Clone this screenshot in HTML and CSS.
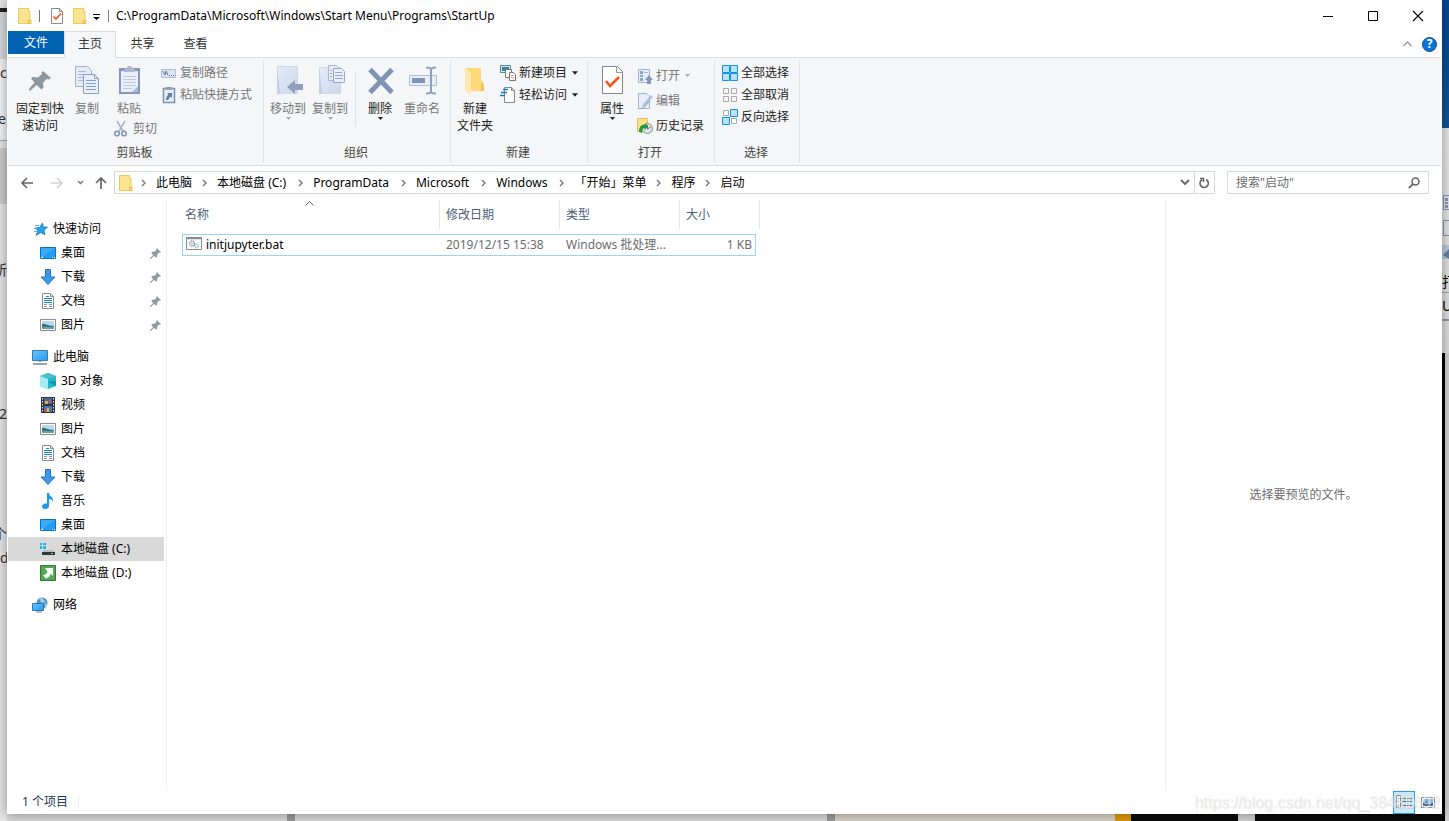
FILE: index.html
```html
<!DOCTYPE html>
<html lang="zh-CN">
<head>
<meta charset="utf-8">
<title>C:\ProgramData\Microsoft\Windows\Start Menu\Programs\StartUp</title>
<link rel="stylesheet" href="styles.css">
</head>
<body>
<svg class="defs" aria-hidden="true">
  <defs>
    <linearGradient id="gBlue" x1="0" y1="0" x2="1" y2="1"><stop offset="0" stop-color="#6fc6fb"/><stop offset="1" stop-color="#1f9bf0"/></linearGradient>
    <linearGradient id="gPale" x1="0" y1="0" x2="1" y2="1"><stop offset="0" stop-color="#e3ebf6"/><stop offset="1" stop-color="#cdd9ea"/></linearGradient>
  </defs>
  <symbol id="folder" viewBox="0 0 16 18"><path d="M1.500 1.500h10v3h1.500v12h-11.500z" fill="#ffe48f" stroke="#edc85f"/><path d="M11.500 13.500h2.500v3h-2.500z" fill="#ffe9a5" stroke="#e0b63f"/></symbol>
  <symbol id="pin" viewBox="0 0 12 12"><path d="M7.500 0l4.500 4.500-1.200.6-.8-.2-2.200 2.300.1 2.200-1.300 1.300L4.400 8.500.8 12H0v-.8l3.500-3.600L1.300 5.400l1.300-1.300 2.200.1 2.300-2.200-.2-.8z" fill="#90999f"/></symbol>
  <symbol id="arrow" viewBox="0 0 7 4"><path d="M0 0h7L3.500 4z" fill="currentColor"/></symbol>
  <symbol id="chev" viewBox="0 0 5 8"><path d="M1 1l3 3-3 3" fill="none" stroke="#777" stroke-width="1.400"/></symbol>
  <symbol id="desktop" viewBox="0 0 16 16"><path d="M.5 2.500h15v11H.5z" fill="#1e9df7" stroke="#0b73bf"/><path d="M1 3h14L3 12H1z" fill="#3aaafc"/><path d="M1 12.500h2m9 0h1m1 0h1" stroke="#fff"/></symbol>
  <symbol id="download" viewBox="0 0 16 16"><path d="M5.500.5h5v7.500h4.500L8 15.500 1 8h4.500z" fill="#4097e8" stroke="#1f74c5"/></symbol>
  <symbol id="doc" viewBox="0 0 16 16"><path d="M2.500.5h8l3 3v12h-11z" fill="#fff" stroke="#858d94"/><path d="M10.500.5v3h3" fill="none" stroke="#858d94"/><path d="M6 3.500h3M4 5.500h8M4 7.500h8M4 9.500h8" stroke="#1687d5"/><path d="M4 11.500h3m2 0h3M4 13.500h3m2 0h3" stroke="#8d969e"/></symbol>
  <symbol id="picture" viewBox="0 0 16 16"><path d="M.5 2.500h15v11H.5z" fill="#fff" stroke="#8b8b8b"/><path d="M2 4h12v8H2z" fill="#b4daf6"/><path d="M2 7c3-1 5 2 12 2v2H2z" fill="#3e766e"/><path d="M2 10.500c4-1 8 0 12-.5v2H2z" fill="#6d9cc8"/></symbol>
  <symbol id="pc" viewBox="0 0 16 16"><path d="M.5 1.500h15v10H.5z" fill="url(#gBlue)" stroke="#397dae"/><path d="M6 12h4v1H6z" fill="#b8c7d3"/><path d="M1 15h14" stroke="#74899d" stroke-width="1.500"/></symbol>
  <symbol id="cube" viewBox="0 0 16 16"><path d="M0 3l8-3 8 3v10l-8 3-8-3z" fill="#24b6ce"/><path d="M0 3l8-3 8 3-8 3z" fill="#49c2d0"/><path d="M0 3l8 3v10l-8-3z" fill="#a5ebf1"/><path d="M8 9l8 4V8z" fill="#0798b2"/></symbol>
  <symbol id="video" viewBox="0 0 16 16"><path d="M1 0h14v16H1z" fill="#30343a"/><path d="M4 1h8v6H4z" fill="#4267ad"/><path d="M4 9h8v6H4z" fill="#4778bd"/><path d="M5 4h3v3H5zm2 7h2v4H7z" fill="#e9b528"/><path d="M9 3h2v3H9zM5 12h2v3H5z" fill="#ca5446"/><path d="M2.500 1v15M13.500 1v15" stroke="#e5e7e9" stroke-dasharray="1.500 1.500"/></symbol>
  <symbol id="music" viewBox="0 0 16 16"><path d="M7 0h2c0 4 5 3 4 9-1-3-3-3-4-3v7c0 2-1.500 3-4 3-1.500 0-3-.8-3-2.500 0-2 2-3.500 5-3z" fill="#179bf0"/></symbol>
  <symbol id="diskc" viewBox="0 0 16 16"><path d="M0 2h2v2H0zm3 0h3v2H3zM0 5h2v3H0zm3 0h3v3H3z" fill="#20b5ee"/><path d="M4 9h9l1.500 2H2.500z" fill="#b8bcc0"/><path d="M2 11h13v3H2z" fill="#35393c"/><path d="M11 12.500h2" stroke="#52e261"/></symbol>
  <symbol id="diskd" viewBox="0 0 16 16"><path d="M.5.5h15v15H.5z" fill="#53a755" stroke="#2e7a33"/><path d="M5 3h8v8l-2.500-2.500-1 3L7 13l-1 .5-3-3 3-1.500 1.500-2z" fill="#fff"/></symbol>
  <symbol id="network" viewBox="0 0 16 16"><circle cx="10" cy="6" r="5.500" fill="#4c93c0"/><path d="M7 2c2 1 1 3 3 4l3-1 2 3-2 3V4L10 1z" fill="#a5d2e8"/><path d="M.5 6.500h11v7H.5z" fill="url(#gBlue)" stroke="#3077aa"/><path d="M4 15h6" stroke="#6f8495"/></symbol>
  <symbol id="star" viewBox="0 0 16 16"><path d="M10.500 2l.8 4 4.200.2-3.500 2.800.8 4.800-3.800-2.300L4 14.500l2-4.800-3-2.700 4.500-.5z" fill="#2b9ee9" stroke="#1778c2" stroke-width=".8"/><path d="M3 4.500h4M2 7.500h3M2 10.500h3" stroke="#58aee8"/></symbol>
</svg>

<div class="backdrop" aria-hidden="true">
  <div class="back-left"><i class="bl-dark"></i><i class="bl-tool"></i><i class="bl-panel"></i><i class="bl-side"></i>
    <span class="t1">cs</span><span class="t2">eb</span><span class="t3">所</span><span class="t4">32</span><span class="t5">个</span><span class="t6">d</span></div>
  <div class="back-right"><i class="br-blue"></i><i class="br-light">
    <svg width="7" height="80" viewBox="0 0 7 80"><path d="M7 .5H1.500v14H7M7 25.500H1.500v15H7" fill="none" stroke="#8598bd"/><path d="M3 3h3v3H3zm0 4h3v2H3zm0 3h3v3H3z" fill="#8598bd"/><path d="M0 50h7v14H0z" fill="#bdcadd"/><path d="M1 60l6-6v10z" fill="#6880a5"/></svg>
    <b>打</b><b class="u">U</b></i><i class="br-dark"></i></div>
  <div class="back-bottom"><i class="b1"></i><i class="b2"></i><i class="b3"></i><i class="b2"></i><i class="b4"></i><i class="b5"></i><i class="b6"></i><i class="b7"></i><i class="b6 grow"></i></div>
</div>

<div class="window">
  <header class="titlebar">
    <svg class="ti" width="16" height="18"><use href="#folder"/></svg>
    <i class="tsep"></i>
    <button class="plain" aria-label="属性"><svg width="14" height="16" viewBox="0 0 14 16"><path d="M1.500.5h8l3 3v12h-11z" fill="#fff" stroke="#8c8c8c"/><path d="M9.500.5v3h3" fill="none" stroke="#8c8c8c"/><path d="M3.500 8.500L6 11l5-5.500" fill="none" stroke="#f2581b" stroke-width="1.700"/></svg></button>
    <button class="plain" aria-label="新建文件夹"><svg width="16" height="18"><use href="#folder"/></svg></button>
    <button class="plain qa" aria-label="自定义快速访问工具栏"><svg width="7" height="6" viewBox="0 0 7 6"><path d="M0 0h7v1H0zM0 3h7L3.500 6z" fill="#000"/></svg></button>
    <i class="tsep"></i>
    <h1>C:\ProgramData\Microsoft\Windows\Start Menu\Programs\StartUp</h1>
    <div class="controls">
      <button class="plain" aria-label="最小化"><svg width="10" height="10"><path d="M0 5.500h10" stroke="#000"/></svg></button>
      <button class="plain" aria-label="最大化"><svg width="10" height="10"><path d="M.5.5h9v9h-9z" fill="none" stroke="#000"/></svg></button>
      <button class="plain" aria-label="关闭"><svg width="10" height="10"><path d="M0 0l10 10M10 0L0 10" stroke="#000" stroke-width="1.100"/></svg></button>
    </div>
  </header>

  <nav class="tabs">
    <button class="file">文件</button><button class="active">主页</button><button>共享</button><button>查看</button>
    <div class="help">
      <button class="plain" aria-label="折叠功能区"><svg width="9" height="6"><path d="M.5 5l4-4 4 4" fill="none" stroke="#999" stroke-width="1.300"/></svg></button>
      <button class="plain round" aria-label="帮助">?</button>
    </div>
  </nav>

  <section class="ribbon">
    <div class="group g-clip">
      <div class="tools">
        <button class="big pinbtn"><svg width="32" height="32" viewBox="0 0 32 32"><path d="M19 6l8 7-2.500 1.500-2-.5-3.500 4 .5 4.500-2 2-5-4.500-6 5.500H5v-1.500l5.500-6.500L7 13.500l1.500-1.500 5.500.5 4-3.500-.5-1.500z" fill="#8c979e"/></svg><span>固定到快<br>速访问</span></button>
        <button class="big off copybtn"><svg width="32" height="32" viewBox="0 0 32 32"><path d="M4.500 1.500h12l4 4v16h-16z" fill="#e4ecf7" stroke="#a3b3cf"/><path d="M7 6.500h8M7 9.500h10M7 12.500h10M7 15.500h10" stroke="#a8b9d6"/><path d="M12.500 9.500h11l4 4v15h-15z" fill="#e9eff8" stroke="#8ea0c2"/><path d="M23.500 9.500v4h4M15 15.500h10M15 18.500h10M15 21.500h10M15 24.500h10" fill="none" stroke="#8ea0c2"/></svg><span>复制</span></button>
        <div class="paste">
          <button class="big off"><svg width="32" height="32" viewBox="0 0 32 32"><path d="M6 3h21v26H6z" fill="#8597bb"/><path d="M8 6h17v21H8z" fill="#eaf0f9"/><path d="M11 5c0-2 3-1 4-4h3c1 3 4 2 4 4v2H11z" fill="#a9b7d1"/><path d="M10 11.500h13M10 14.500h13M10 17.500h13M10 20.500h13M10 23.500h10" stroke="#bdcae0"/><path d="M25 27h-6l6-6z" fill="#a9bbd9"/></svg><span>粘贴</span></button>
          <button class="small off"><svg width="16" height="16" viewBox="0 0 16 16"><path d="M3 0l6.500 11M11 0L4.500 11" stroke="#a8b5cb" stroke-width="1.600"/><circle cx="3" cy="12.500" r="2.300" fill="none" stroke="#8596b6" stroke-width="1.600"/><circle cx="10" cy="12.500" r="2.300" fill="none" stroke="#8596b6" stroke-width="1.600"/></svg>剪切</button>
        </div>
        <div class="stack">
          <button class="small off"><svg width="16" height="16" viewBox="0 0 16 16"><path d="M.5 4.500h14v8H.5z" fill="#dce5f2" stroke="#aebdd5"/><path d="M2 6l2 4 1-4 2 4" fill="none" stroke="#5d769f"/><path d="M8 10.500h1m1 0h1m1 0h1" stroke="#5d769f"/></svg>复制路径</button>
          <button class="small off"><svg width="16" height="16" viewBox="0 0 16 16"><path d="M2.500 1.500h11v14h-11z" fill="#e8eef8" stroke="#8093b7" stroke-width="1.600"/><path d="M5 0h6v3H5z" fill="#8fa0c0"/><path d="M6 6h5v5L9.500 9.500 7 13H5c0-3 1-4 2.500-5.500z" fill="#687da5"/></svg>粘贴快捷方式</button>
        </div>
      </div>
      <h2>剪贴板</h2>
    </div>
    <div class="group g-org">
      <div class="tools">
        <button class="big off"><svg width="32" height="32" viewBox="0 0 32 32"><path d="M5.500 1.500h20v27h-20z" fill="url(#gPale)" stroke="#ccd9eb"/><path d="M8 26v3H5V2z" fill="#c1d0e7"/><path d="M15 22l8-7v4h8v6h-8v4z" fill="#8e9fbe"/></svg><span>移动到</span><svg class="dd" width="5" height="3"><use href="#arrow"/></svg></button>
        <button class="big off"><svg width="32" height="32" viewBox="0 0 32 32"><path d="M5.500 2.500h21v26h-21z" fill="url(#gPale)" stroke="#ccd9eb"/><path d="M8 26v3H5V3z" fill="#c1d0e7"/><path d="M14.500.5h8l3 3v12h-11z" fill="#e6edf8" stroke="#a7b7d0"/><path d="M19.500 3.500h8l3 3v11h-11z" fill="#eaf0f8" stroke="#94a7c5"/><path d="M21 7.500h7m-7 3h8m-8 3h8M16 5.500h2m-2 3h2m-2 3h2" stroke="#94a7c5"/></svg><span>复制到</span><svg class="dd" width="5" height="3"><use href="#arrow"/></svg></button>
        <i class="vsep"></i>
        <button class="big"><svg width="32" height="32" viewBox="0 0 32 32"><path d="M6 4.500l22 23M28 4.500l-22 23" stroke="#8093b7" stroke-width="5"/></svg><span>删除</span><svg class="dd" width="5" height="3"><use href="#arrow"/></svg></button>
        <button class="big off"><svg width="32" height="32" viewBox="0 0 32 32"><path d="M3.500 10.500h27v10h-27z" fill="#e8eff9" stroke="#aebed8"/><path d="M6 13h13v5H6z" fill="#8194b8"/><path d="M20 2.500c3 0 5 0 5 3v20c0 3-2 3-5 3M30 2.500c-3 0-5 0-5 3v20c0 3 2 3 5 3" fill="none" stroke="#8d9fbe" stroke-width="2"/></svg><span>重命名</span></button>
      </div>
      <h2>组织</h2>
    </div>
    <div class="group g-new">
      <div class="tools">
        <button class="big"><svg width="32" height="32" viewBox="0 0 32 32"><path d="M6 3h16v13h2v10H6z" fill="#ffd978"/><path d="M6 3l6 4v23l-6-4z" fill="#ffe9ae"/><path d="M22 16v10h3v-6z" fill="#efc45b"/></svg><span>新建<br>文件夹</span></button>
        <div class="stack">
          <button class="small"><svg width="16" height="16" viewBox="0 0 16 16"><path d="M.5.500h10v7H.5z" fill="#c7eafa" stroke="#5689a0"/><path d="M2 2h7v4H2z" fill="#3c829c"/><path d="M5.500 4.500h6v8h-6z" fill="#fff" stroke="#777"/><path d="M9.500 7.500h4l2 2v6h-6z" fill="#fff" stroke="#777"/><path d="M11 10.500h3m-3 2h3" stroke="#e49da0"/></svg>新建项目<svg class="side" width="6" height="4"><use href="#arrow"/></svg></button>
          <button class="small"><svg width="16" height="16" viewBox="0 0 16 16"><path d="M4.500.5h7l3 3v12h-10z" fill="#fff" stroke="#888"/><path d="M11.500.5v3h3" fill="none" stroke="#888"/><path d="M3 2.500h5M1 5.500h6M0 8.500h5" stroke="#1877b9" stroke-width="1.300"/></svg>轻松访问<svg class="side" width="6" height="4"><use href="#arrow"/></svg></button>
        </div>
      </div>
      <h2>新建</h2>
    </div>
    <div class="group g-open">
      <div class="tools">
        <button class="big"><svg width="32" height="32" viewBox="0 0 32 32"><path d="M6.500 1.500h15l5 5v22h-20z" fill="#fff" stroke="#858585"/><path d="M20.500 1.500v6h6" fill="#eee" stroke="#999"/><path d="M10 16l4 5 9-9" fill="none" stroke="#f4561d" stroke-width="2.600"/></svg><span>属性</span><svg class="dd" width="5" height="3"><use href="#arrow"/></svg></button>
        <div class="stack loose">
          <button class="small off"><svg width="16" height="16" viewBox="0 0 16 16"><path d="M1.500 1.500h11v13h-11z" fill="#e7eef8" stroke="#a2b3cf"/><path d="M3 3h3v3H3zm0 4h3v2H3zm0 3h3v3H3z" fill="#8ea2c4"/><path d="M7 4.500h4" stroke="#a7b8d2"/><path d="M8 12l4-5 4 5h-2v4h-4v-4z" fill="#8598bb"/></svg>打开<svg class="side" width="5" height="3"><use href="#arrow"/></svg></button>
          <button class="small off"><svg width="16" height="16" viewBox="0 0 16 16"><path d="M1.500.5h8l3 3v12h-11z" fill="#e8eef8" stroke="#a4b5d0"/><path d="M5 15l1-4 8-9 2 2-8 9z" fill="#b0c2de"/><path d="M1 15.500h5l7-8" fill="none" stroke="#8ba4cb"/></svg>编辑</button>
          <button class="small"><svg width="16" height="16" viewBox="0 0 16 16"><path d="M.5.500h10v13H.5z" fill="#ffe28b" stroke="#e4be55"/><circle cx="10.500" cy="10.500" r="5" fill="#e0e3e5" stroke="#878f94"/><path d="M10.500 7v4l3-2" fill="none" stroke="#687176"/><path d="M2 14c0-6 3-8 6-7l1-2 2 4-4 3 .5-2c-2 0-3 2-2 5z" fill="#259c37"/></svg>历史记录</button>
        </div>
      </div>
      <h2>打开</h2>
    </div>
    <div class="group g-select">
      <div class="tools">
        <div class="stack">
          <button class="small"><svg width="16" height="16" viewBox="0 0 16 16"><path d="M.5.500h7v7h-7zM8.500.5h7v7h-7zM.5 8.500h7v7h-7zM8.500 8.500h7v7h-7z" fill="#b9e3fb" stroke="#1593e2"/></svg>全部选择</button>
          <button class="small"><svg width="16" height="16" viewBox="0 0 16 16"><path d="M1.500 1.500h5v5h-5zM9.500 1.500h5v5h-5zM1.500 9.500h5v5h-5zM9.500 9.500h5v5h-5z" fill="#fbfbfb" stroke="#aaa"/></svg>全部取消</button>
          <button class="small"><svg width="16" height="16" viewBox="0 0 16 16"><path d="M8.500.5h7v7h-7zM.5 8.500h7v7h-7z" fill="#b9e3fb" stroke="#1593e2"/><path d="M1.500 1.500h5v5h-5zM9.500 9.500h5v5h-5z" fill="#fbfbfb" stroke="#aaa"/></svg>反向选择</button>
        </div>
      </div>
      <h2>选择</h2>
    </div>
  </section>

  <div class="addressrow">
    <div class="history">
      <button class="plain" aria-label="后退"><svg width="12" height="12"><path d="M12 6H1M6 1L1 6l5 5" fill="none" stroke="#666" stroke-width="1.600"/></svg></button>
      <button class="plain" aria-label="前进"><svg width="12" height="12"><path d="M0 6h11M6 1l5 5-5 5" fill="none" stroke="#d2d2d2" stroke-width="1.600"/></svg></button>
      <button class="plain recent" aria-label="最近浏览的位置"><svg width="7" height="5"><path d="M1 1l2.500 2.500L6 1" fill="none" stroke="#777" stroke-width="1.400"/></svg></button>
      <button class="plain up" aria-label="上移"><svg width="12" height="12"><path d="M6 12V1M1 6l5-5 5 5" fill="none" stroke="#666" stroke-width="1.700"/></svg></button>
    </div>
    <div class="address">
      <svg class="afolder" width="16" height="18"><use href="#folder"/></svg>
      <svg class="chev" width="5" height="8"><use href="#chev"/></svg><button class="plain">此电脑</button>
      <svg class="chev" width="5" height="8"><use href="#chev"/></svg><button class="plain latin">本地磁盘 (C:)</button>
      <svg class="chev" width="5" height="8"><use href="#chev"/></svg><button class="plain latin">ProgramData</button>
      <svg class="chev" width="5" height="8"><use href="#chev"/></svg><button class="plain latin">Microsoft</button>
      <svg class="chev" width="5" height="8"><use href="#chev"/></svg><button class="plain latin">Windows</button>
      <svg class="chev" width="5" height="8"><use href="#chev"/></svg><button class="plain">「开始」菜单</button>
      <svg class="chev" width="5" height="8"><use href="#chev"/></svg><button class="plain">程序</button>
      <svg class="chev" width="5" height="8"><use href="#chev"/></svg><button class="plain">启动</button>
      <button class="plain drop" aria-label="以前的位置"><svg width="10" height="7"><path d="M1 1l4 4 4-4" fill="none" stroke="#666" stroke-width="1.900"/></svg></button>
      <button class="plain refresh" aria-label="刷新"><svg width="11" height="12"><path d="M7 2.500a4.200 4.200 0 1 1-4 .2M1 1.500h3.500V5" fill="none" stroke="#666" stroke-width="1.600"/></svg></button>
    </div>
    <form class="search">
      <input type="text" aria-label="搜索" placeholder='搜索"启动"'>
      <button class="plain" type="button" aria-label="搜索"><svg width="12" height="12"><circle cx="7.500" cy="4.500" r="3.500" fill="none" stroke="#666" stroke-width="1.500"/><path d="M5 7L.8 11.200" stroke="#666" stroke-width="1.800"/></svg></button>
    </form>
  </div>

  <div class="content">
    <nav class="tree">
      <ul>
        <li class="root"><svg><use href="#star"/></svg>快速访问</li>
        <li><svg><use href="#desktop"/></svg>桌面<svg class="pin"><use href="#pin"/></svg></li>
        <li><svg><use href="#download"/></svg>下载<svg class="pin"><use href="#pin"/></svg></li>
        <li><svg><use href="#doc"/></svg>文档<svg class="pin"><use href="#pin"/></svg></li>
        <li><svg><use href="#picture"/></svg>图片<svg class="pin"><use href="#pin"/></svg></li>
      </ul>
      <ul>
        <li class="root"><svg><use href="#pc"/></svg>此电脑</li>
        <li><svg><use href="#cube"/></svg>3D 对象</li>
        <li><svg><use href="#video"/></svg>视频</li>
        <li><svg><use href="#picture"/></svg>图片</li>
        <li><svg><use href="#doc"/></svg>文档</li>
        <li><svg><use href="#download"/></svg>下载</li>
        <li><svg><use href="#music"/></svg>音乐</li>
        <li><svg><use href="#desktop"/></svg>桌面</li>
        <li class="current"><svg><use href="#diskc"/></svg>本地磁盘 (C:)</li>
        <li><svg><use href="#diskd"/></svg>本地磁盘 (D:)</li>
      </ul>
      <ul>
        <li class="root"><svg><use href="#network"/></svg>网络</li>
      </ul>
    </nav>
    <main>
      <table>
        <colgroup><col class="c-name"><col class="c-date"><col class="c-type"><col class="c-size"><col class="c-end"></colgroup>
        <thead><tr><th>名称<svg class="sort" width="9" height="5"><path d="M.5 4.500l4-4 4 4" fill="none" stroke="#666"/></svg></th><th>修改日期</th><th>类型</th><th colspan="2">大小</th></tr></thead>
        <tbody><tr><td><svg width="16" height="14" viewBox="0 0 16 14"><path d="M.5.500h15v12H.5z" fill="#fff" stroke="#858b91"/><path d="M1 1.500h14" stroke="#858b91" stroke-width="1.500"/><circle cx="6" cy="6.500" r="2.500" fill="none" stroke="#8f989f" stroke-width="1.400" stroke-dasharray="1.400 .6"/><circle cx="6" cy="6.500" r=".8" fill="#8f989f"/><circle cx="10.500" cy="9" r="2" fill="#d8edf9" stroke="#82aecb" stroke-dasharray="1.300 .6"/></svg>initjupyter.bat</td><td>2019/12/15 15:38</td><td>Windows 批处理...</td><td>1 KB</td><td></td></tr></tbody>
      </table>
    </main>
    <aside>选择要预览的文件。</aside>
  </div>

  <footer>
    <span>1 个项目</span>
    <div class="views">
      <button class="plain on" aria-label="详细信息"><svg width="16" height="14" viewBox="0 0 16 14"><path d="M.5.500h4v12h-4z" fill="#fff" stroke="#888"/><path d="M2 3.500h1m-1 3h1" stroke="#55708c"/><path d="M2 10.500h1" stroke="#d44"/><path d="M6 3.500h4m1 0h5M6 6.500h4m1 0h5M6 10.500h4m1 0h5" stroke="#56636d"/></svg></button>
      <button class="plain" aria-label="大缩略图"><svg width="14" height="11" viewBox="0 0 14 11"><path d="M.5.500h13v10H.5z" fill="#fff" stroke="#888"/><path d="M2 2h10v7H2z" fill="#83b9ed"/><path d="M2 6l3-2 3 3 4-1v3H2z" fill="#40658d"/></svg></button>
    </div>
  </footer>
</div>
<div class="watermark">https://blog.csdn.net/qq_38481692</div>
</body>
</html>
```
FILE: styles.css
```css
* { box-sizing: border-box; }
html, body { height: 100%; }
body { margin: 0; overflow: hidden; font: 12px/18px "Noto Sans", "Noto Sans CJK SC", sans-serif; color: #000; background: #dedede; }
button, input { font: inherit; color: inherit; }
h1, h2, ul { margin: 0; padding: 0; font: inherit; list-style: none; }
svg { display: block; flex: none; overflow: visible; }
i { display: block; flex: none; }
.defs { position: absolute; width: 0; height: 0; }
.plain { display: flex; align-items: center; justify-content: center; border: 0; padding: 0; background: none; white-space: nowrap; }

/* desktop behind the window */
.backdrop { position: absolute; inset: 0; overflow: hidden; font-size: 14px; }
.backdrop i, .backdrop span { position: absolute; font-style: normal; }
.back-left { position: absolute; left: 0; top: 0; bottom: 0; width: 7px; background: #e6e6e6; color: #333; }
.bl-dark { top: 8px; width: 7px; height: 4px; background: #222; }
.bl-tool { top: 12px; width: 7px; height: 47px; background: #d4d9de; }
.bl-panel { top: 59px; width: 7px; height: 82px; background: #f3f4f5; border-bottom: 1px solid #aaa; }
.bl-side { top: 148px; width: 7px; height: 56px; background: #ccc; }
.back-left span { right: 0; }
.back-left .t1 { top: 64px; left: 0; }
.back-left .t2 { top: 110px; left: -2px; }
.back-left .t3 { top: 261px; }
.back-left .t4 { top: 405px; }
.back-left .t5 { top: 525px; }
.back-left .t6 { top: 549px; left: 0; }
.back-right { position: absolute; right: 0; top: 0; bottom: 0; width: 7px; background: #d0d0d0; overflow: hidden; }
.br-blue { top: 0; width: 7px; height: 128px; background: linear-gradient(#074494, #125493); }
.br-light { top: 128px; width: 7px; height: 225px; background: linear-gradient(#e9e9e9, #ddd); padding-top: 67px; }
.br-light b { display: block; font-weight: 400; line-height: 14px; }
.br-light .u { margin-top: 3px; line-height: 26px; border-top: 1px solid #aaa; border-bottom: 2px solid #999; }
.br-dark { top: 353px; bottom: 0; width: 3px; background: #000; }
.back-bottom { position: absolute; left: 7px; right: 7px; bottom: 0; height: 7px; display: flex; }
.back-bottom i { position: static; height: 7px; }
.b1 { width: 280px; background: #d8d8d8; }
.b2 { width: 8px; background: #999; }
.b3 { width: 532px; background: #d8d8d8; }
.b4 { width: 280px; background: #d9d2c8; }
.b5 { width: 16px; background: #dc9a0b; }
.b6 { width: 107px; background: #0a0a0a; }
.b7 { width: 17px; background: #d2d2d2; }
.back-bottom .grow { flex: 1; }

.window { position: relative; display: flex; flex-direction: column; height: calc(100% - 7px); margin: 0 7px; padding: 0 1px; background: #fff; box-shadow: 0 0 12px rgba(0, 0, 0, .4); }

.titlebar { display: flex; align-items: center; height: 31px; padding-left: 9px; }
.tsep { width: 1px; height: 12px; margin: 0 7px 0 6px; background: #777; }
.titlebar .tsep + .plain { margin: 0 8px 0 3px; }
.qa { margin: 3px 2px 0 5px; }
.titlebar h1 { white-space: nowrap; }
.controls { display: flex; margin-left: auto; padding-right: 1px; }
.controls .plain { width: 45px; height: 30px; }

.tabs { display: flex; height: 27px; border-bottom: 1px solid #dadbdc; }
.tabs > button { width: 53px; height: 26px; border: 0; padding: 0; background: none; color: #333; }
.tabs > .file { width: 56px; background: #0063b1; color: #fff; height: 23px; }
.tabs > .active { width: 52px; height: 27px; padding-bottom: 2px; border: 1px solid #dadbdc; border-bottom: 0; background: #f5f6f7; }
.help { display: flex; align-items: center; gap: 10px; margin-left: auto; padding-right: 4px; }
.round { width: 15px; height: 15px; border: 1px solid #0b4f98; border-radius: 50%; background: #0b74d4; color: #fff; font-weight: 700; }

.ribbon { display: flex; height: 108px; padding: 3px 0; background: #f5f6f7; border-bottom: 1px solid #dadbdc; }
.group { display: flex; flex-direction: column; border-right: 1px solid #e2e3e4; }
.g-clip { width: 256px; }
.g-org { width: 187px; }
.g-new { width: 137px; }
.g-open { width: 127px; }
.g-select { width: 85px; }
.tools { display: flex; flex: 1; padding: 1px 0 0 3px; }
.group h2 { height: 18px; padding-right: 2px; text-align: center; color: #444; }
.big { position: relative; display: flex; flex-direction: column; align-items: center; width: 42px; height: 76px; border: 0; padding: 3px 0 0; background: none; color: #222; white-space: nowrap; }
.big span { line-height: 17px; margin-top: 3px; }
.big.off, .small.off { color: #777; }
.off .dd, .off .side { color: #aaa; }
.pinbtn { width: 58px; }
.copybtn { width: 36px; }
.paste { width: 56px; }
.paste .big { height: 56px; width: 48px; }
.paste .small { margin-left: 9px; }
.stack { display: flex; flex-direction: column; }
.small { display: flex; align-items: center; gap: 3px; height: 22px; border: 0; padding: 0; background: none; color: #222; white-space: nowrap; }
.small .side { margin-left: 2px; }
.loose .small { height: 25px; }
.loose { margin-top: 1px; }
.g-new .stack, .g-open .stack { margin-left: 4px; }
.g-select .tools { padding-left: 7px; }
.vsep { width: 1px; height: 55px; margin: 10px 3px 0 4px; background: #dfe1e3; }

.addressrow { display: flex; align-items: center; height: 33px; padding-right: 12px; }
.history { display: flex; width: 106px; padding-left: 4px; }
.history .plain { width: 30px; height: 22px; }
.history .recent { width: 17px; }
.history .up { width: 24px; }
.address { display: flex; flex: 1; align-items: center; height: 23px; border: 1px solid #d9d9d9; padding-left: 3px; }
.chev { margin: 0 10px; }
.latin { margin-right: 2px; }
.afolder + .chev { margin-left: 7px; }
.drop { width: 18px; margin-left: auto; height: 21px; }
.refresh { width: 20px; height: 21px; border-left: 1px solid #d9d9d9; }
.search { display: flex; width: 202px; height: 23px; margin-left: 12px; border: 1px solid #d9d9d9; padding-right: 8px; }
.search input { flex: 1; min-width: 0; border: 0; padding: 0 0 0 8px; outline: 0; background: none; }
.search input::placeholder { color: #6d6d6d; opacity: 1; }

.content { display: flex; flex: 1; min-height: 0; padding-top: 1px; }
.tree { width: 159px; padding-top: 17px; border-right: 1px solid #f0f0f0; }
.tree ul { margin-bottom: 8px; }
.tree li { display: flex; align-items: center; gap: 5px; height: 24px; margin-right: 2px; padding-left: 32px; }
.tree .root { padding-left: 24px; }
.tree svg { width: 16px; height: 16px; }
.tree .pin { width: 11px; height: 11px; margin: 0 3px 0 auto; }
.tree .current { background: #d9d9d9; }
main { flex: 1; padding-left: 15px; }
table { width: 578px; table-layout: fixed; border-collapse: separate; border-spacing: 0; color: #6d6d6d; }
.c-name { width: 258px; }
.c-date, .c-type { width: 120px; }
.c-size { width: 76px; }
.c-end { width: 4px; }
th { position: relative; height: 29px; padding: 0 0 0 6px; border-right: 1px solid #e5e5e5; color: #4c607a; font-weight: 400; text-align: left; }
th:first-child, td:first-child { padding-left: 3px; }
.sort { position: absolute; left: 123px; top: 1px; }
thead::after { content: ""; display: block; height: 5px; }
td { height: 22px; padding: 0 0 0 6px; line-height: 18px; white-space: nowrap; border: solid #99d1ff; border-width: 1px 0; }
td:first-child { border-left-width: 1px; color: #000; }
td svg { display: inline-block; margin-right: 4px; vertical-align: -2px; }
td:nth-child(4) { border-right-width: 1px; padding-right: 3px; text-align: right; }
td:last-child { border: 0; padding: 0; }
aside { display: flex; align-items: center; justify-content: center; width: 276px; border-left: 1px solid #f0f0f0; color: #6d6d6d; }

footer { display: flex; align-items: center; height: 24px; padding: 0 3px 0 14px; color: #1e395b; }
footer span { padding-right: 10px; line-height: 12px; border-right: 1px solid #eee; }
.views { display: flex; gap: 3px; margin-left: auto; }
.views .plain { width: 20px; height: 23px; }
.views .on { width: 22px; border: 1px solid #26a0da; background: #cce8f6; }
.watermark { position: absolute; right: 9px; bottom: 9px; font: 16px/18px "Liberation Sans", sans-serif; color: rgba(235, 235, 235, .75); text-shadow: 1px 1px 1px rgba(130, 130, 130, .18); pointer-events: none; }
```
